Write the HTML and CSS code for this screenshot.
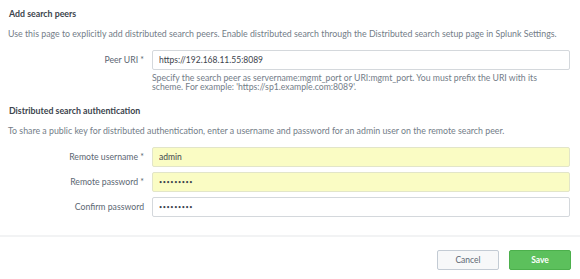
FILE: index.html
```html
<!DOCTYPE html>
<html lang="en">
  <head>
    <meta charset="UTF-8" />
    <title>Add search peers</title>
    <link rel="stylesheet" href="styles.css">
  </head>
  <body>
    <div class="page">
      <div class="section">
        <h2>Add search peers</h2>
        <p class="desc">Use this page to explicitly add distributed search peers. Enable distributed search through the Distributed search setup page in Splunk Settings.</p>
        <div class="row">
          <label>Peer URI *</label>
          <div class="field">
            <input type="text" class="textInput" value="https://192.168.11.55:8089" />
            <p class="help">Specify the search peer as servername:mgmt_port or URI:mgmt_port. You must prefix the URI with its scheme. For example: 'https://sp1.example.com:8089'.</p>
          </div>
        </div>
      </div>
      <div class="section second">
        <h2>Distributed search authentication</h2>
        <p class="desc">To share a public key for distributed authentication, enter a username and password for an admin user on the remote search peer.</p>
        <div class="row">
          <label>Remote username *</label>
          <div class="field"><input type="text" class="textInput filled" value="admin" /></div>
        </div>
        <div class="row">
          <label>Remote password *</label>
          <div class="field"><input type="password" class="textInput filled" value="password1" /></div>
        </div>
        <div class="row">
          <label>Confirm password</label>
          <div class="field"><input type="password" class="textInput" value="password1" /></div>
        </div>
      </div>
    </div>
    <div class="footer">
      <button class="btn cancel">Cancel</button>
      <button class="btn save">Save</button>
    </div>
  </body>
</html>
```

FILE: styles.css
```css
* {
  margin: 0;
  padding: 0;
  box-sizing: border-box;
  font-family: "Lato", "Liberation Sans", sans-serif;
}
body {
  background-color: #ffffff;
  width: 580px;
  height: 279px;
  overflow: hidden;
}
.page {
  padding: 8px 10px 0 8px;
}
h2 {
  font-size: 8.8px;
  font-weight: 700;
  color: #3c444d;
  line-height: 12px;
  margin-left: 1px;
}
.desc {
  font-size: 8.8px;
  color: #737d88;
  line-height: 12px;
  margin-top: 8px;
}
.second {
  margin-top: 14px;
}
.row {
  display: flex;
  align-items: flex-start;
  margin-top: 5px;
}
.section .row:first-of-type {
  margin-top: 10px;
}
.row label {
  width: 136px;
  text-align: right;
  font-size: 8.7px;
  color: #5c6773;
  line-height: 20px;
  margin-right: 8px;
}
.field {
  flex: 1;
}
.textInput {
  display: block;
  width: 418px;
  height: 20px;
  border: 1px solid #d4d8dc;
  border-radius: 2px;
  padding: 0 6px;
  font-size: 8.5px;
  color: #3c444d;
  background-color: #ffffff;
  outline: none;
}
.textInput[type="password"] {
  font-size: 5.5px;
  letter-spacing: 0.6px;
}
.textInput.filled {
  background-color: #fafcc4;
  border-color: #e2e5c9;
}
.help {
  font-size: 8.7px;
  color: #737d88;
  line-height: 9px;
  margin-top: 3px;
  padding-right: 20px;
}
.footer {
  border-top: 2px solid #f2f3f4;
  margin-top: 18px;
  display: flex;
  justify-content: flex-end;
  gap: 10px;
  padding: 13px 9px 0 0;
}
.btn {
  width: 62px;
  height: 20px;
  border-radius: 2px;
  font-size: 8.5px;
  cursor: pointer;
}
.cancel {
  background-color: #f7f8f9;
  border: 1px solid #c3cbd4;
  color: #5c6773;
}
.save {
  background-color: #5cc05c;
  border: 1px solid #4cb04c;
  color: #ffffff;
  font-weight: 700;
}
```
